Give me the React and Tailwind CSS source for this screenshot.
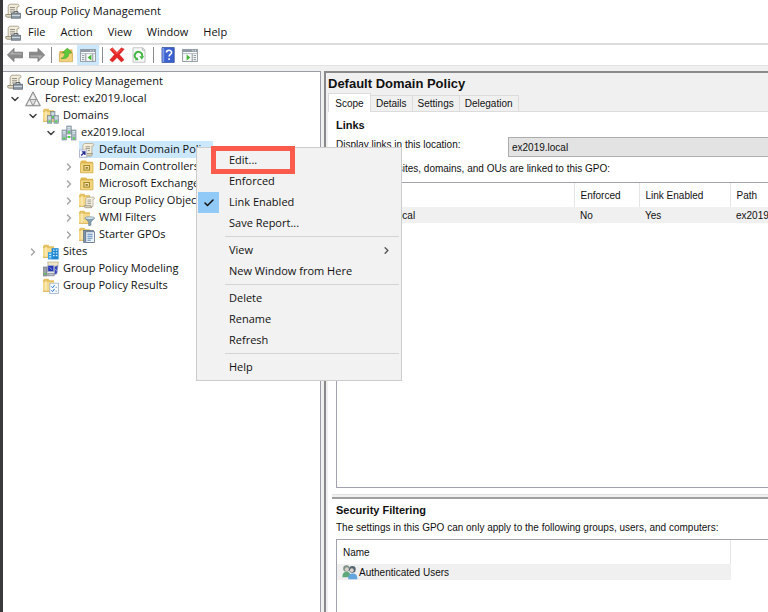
import clsx from 'clsx'
import { Check, ChevronDown, ChevronRight } from 'lucide-react'

function Svg({ children, size = 16, className }) {
  return (
    <svg width={size} height={size} viewBox="0 0 16 16" fill="none" className={clsx('shrink-0', className)} aria-hidden="true">
      {children}
    </svg>
  )
}

/* shared icon parts */

const Folder = () => (
  <>
    <path d="M0 2.5 1 .8h4.4l1 1.5H11V13H0z" fill="#e6c162" />
    <path d="M0 4h11v9.6H0z" fill="#f5da8b" />
    <path d="M2.4 3h1.2v10H2.4z" fill="#fcefc4" />
    <path d="M0 12.8h11v.9H0z" fill="#d3ab4c" />
  </>
)

const Scroll = () => (
  <>
    <path d="M4.5 1.2h8.2c1.6 0 1.8 2.8.3 2.8h-1V12H3.2V3.2z" fill="#f1ecdb" stroke="#a59d86" strokeWidth=".9" />
    <path d="M.8 11.5h9.3c-.8 1 .1 2.6 1.3 2.7H2.2c-1.4 0-1.9-1.7-1.4-2.7z" fill="#ded7c2" stroke="#8f8975" strokeWidth=".9" />
    <path d="M5 4.6h5M5 6.8h5M5 9h4" stroke="#8f8d84" strokeWidth="1" />
  </>
)

const Tower = ({ x, y, h = 8 }) => (
  <>
    <rect x={x} y={y} width="4.4" height={h} fill="#a9bac4" stroke="#6d7f8a" strokeWidth=".6" />
    <path d={`M${x + 0.8} ${y + 1.6}h2.8M${x + 0.8} ${y + 3.2}h2.8`} stroke="#eef4f7" strokeWidth=".8" />
    <rect x={x + 1.2} y={y + h - 2.6} width="2" height="1.8" fill="#45d93c" />
  </>
)

/* tree icons */

const ConsoleIcon = () => (
  <Svg>
    <Scroll />
    <rect x="6.5" y="10.2" width="9" height="5" fill="#8d9aa6" stroke="#56626d" strokeWidth=".7" />
    <path d="M9 10V8.6h4V10" stroke="#56626d" strokeWidth="1" />
    <path d="M7 12.4h8" stroke="#dfe5e9" strokeWidth=".9" />
  </Svg>
)

const ForestIcon = () => (
  <Svg>
    <path d="M8 .8 15.4 14.8H.6z" fill="#c9c9c9" stroke="#808080" strokeWidth=".9" />
    <path d="M8 3.2 10.4 8H5.6z" fill="#f4f4f4" />
    <path d="M4.8 9 7.2 13.8H2.4zM11.2 9l2.4 4.8H8.8z" fill="#f4f4f4" />
    <path d="M4.6 8.4h6.8L8 14.8z" fill="#dedede" stroke="#808080" strokeWidth=".8" />
  </Svg>
)

const DomainsIcon = () => (
  <Svg>
    <Folder />
    <Tower x={7.6} y={3.6} h={7} />
    <Tower x={4.4} y={7.6} h={7.6} />
    <Tower x={11} y={7.6} h={7.6} />
  </Svg>
)

const DomainIcon = () => (
  <Svg>
    <Tower x={5.8} y={1} h={8} />
    <Tower x={1} y={5} h={10} />
    <Tower x={10.6} y={5} h={10} />
    <path d="M5.4 12h5.2" stroke="#6d7f8a" />
    <rect x="7" y="11" width="2" height="2" fill="#45d93c" />
  </Svg>
)

const GpoLinkIcon = () => (
  <Svg>
    <path d="M5.5 1.5h8.2c1.4 0 1.5 2.4.2 2.4h-1V12h-9V3.4z" fill="#f6efdb" stroke="#b1a687" strokeWidth=".8" />
    <path d="M7 11.5h6.5c-.5 1 0 2.4-1.6 2.6H7z" fill="#d9cfb3" stroke="#8f8975" strokeWidth=".7" />
    <path d="M6.5 4.8h4.5M6.5 6.6h4.5M9 8.6h2" stroke="#8f8d84" strokeWidth=".9" />
    <rect x=".6" y="8" width="7.2" height="7.2" fill="#fff" stroke="#a5a9c4" strokeWidth=".8" />
    <path d="m2.2 13.6 3.4-3.4M2.8 9.9h3.1V13" stroke="#252b92" strokeWidth="1.4" />
  </Svg>
)

const OuIcon = () => (
  <Svg>
    <path d="M1.5 2.6 2.4 1.4H7l1 1.4h6v10.8H1.5z" fill="#e3bb50" />
    <path d="M1.5 4H14v9.8H1.5z" fill="#f3d780" stroke="#cfa948" strokeWidth=".7" />
    <rect x="4.4" y="6" width="6.6" height="5.6" fill="#a38325" />
    <rect x="5.5" y="7" width="4.4" height="3.6" fill="#f6e5a7" />
    <path d="M6.6 8h2.2v1.8H6.6z" fill="#957b2c" />
  </Svg>
)

const GpoFolderIcon = () => (
  <Svg>
    <Folder />
    <path d="M8 4.2h6.4c1.4 0 1.4 2 .2 2H14v7.4H6.8V5.8z" fill="#f8f3e3" stroke="#a29b86" strokeWidth=".7" />
    <path d="M5.3 12.6h6.6c-.3.9.2 1.9 1 2.1H6.4c-1.2 0-1.3-1.4-1.1-2.1z" fill="#ddd6c0" stroke="#8f8975" strokeWidth=".7" />
    <path d="M8.4 7h3.8M8.4 8.8h3.8M8.4 10.6h3.8" stroke="#8e8c84" strokeWidth=".8" />
  </Svg>
)

const WmiIcon = () => (
  <Svg>
    <Folder />
    <path d="M5.8 8h9.8l-3.7 4v3.2l-2.2.5V12z" fill="#86a0b2" stroke="#5e7585" strokeWidth=".6" />
    <ellipse cx="10.7" cy="8.1" rx="4.8" ry="1.4" fill="#cfe2ee" stroke="#6f8796" strokeWidth=".6" />
  </Svg>
)

const StarterIcon = () => (
  <Svg>
    <Folder />
    <rect x="4.6" y="3.4" width="10" height="12" fill="#7c93aa" stroke="#4f6376" strokeWidth=".6" />
    <rect x="6.8" y="4.8" width="8.6" height="10.6" fill="#eef4fa" stroke="#5d7186" strokeWidth=".8" />
    <path d="M8.4 7.2h5.2M8.4 9.2h5.2M8.4 11.2h5.2M8.4 13.2h3.4" stroke="#4679b4" strokeWidth=".9" />
  </Svg>
)

const SitesIcon = () => (
  <Svg>
    <Folder />
    <rect x="8.6" y="4.2" width="7" height="11.2" fill="#1d86cf" />
    <rect x="5" y="8.2" width="4.4" height="7.2" fill="#3aa0e2" />
    <path d="M10 6.2h1.6M12.8 6.2h1.6M10 8.9h1.6M12.8 8.9h1.6M10 11.6h1.6M12.8 11.6h1.6M6.2 10.3h1.8M6.2 12.8h1.8" stroke="#d4efff" strokeWidth="1.2" />
  </Svg>
)

const ModelingIcon = () => (
  <Svg>
    <path d="M4.6 1h10.8l-1.2 8H6z" fill="#eee4c4" stroke="#aaa183" strokeWidth=".6" />
    <rect x="4.8" y="4.6" width="6" height="6" fill="#2736b8" stroke="#a6adc2" strokeWidth=".8" />
    <rect x=".6" y="6" width="3.4" height="9" fill="#9ba2aa" stroke="#666d75" strokeWidth=".6" />
    <path d="m11.4 5.6 3.6-1.2-1 8.4-2.6.8z" fill="#3444bb" stroke="#a6adc2" strokeWidth=".7" />
    <path d="M4.8 12.2h6.4v2.6H4.8z" fill="#b8bec6" stroke="#6b727b" strokeWidth=".6" />
    <path d="M1.4 12.8h1.8" stroke="#45c83e" strokeWidth="1.5" />
    <path d="M6.6 6.4 9 8.6M12.4 8l1.2 2" stroke="#a9b8ff" strokeWidth=".8" />
  </Svg>
)

const ResultsIcon = () => (
  <Svg>
    <Folder />
    <rect x="6.8" y="5.2" width="8.6" height="10.2" fill="#f7fbff" stroke="#9db0c2" strokeWidth=".8" />
    <path d="m8.4 8.4 1.2 1.4 2-2.7M8.4 12.2l1.2 1.4 2-2.7" stroke="#2674c8" strokeWidth="1" />
    <path d="M12.4 9.4h1.6M12.4 13.2h1.6" stroke="#7f93a6" strokeWidth=".8" />
  </Svg>
)

const UsersIcon = () => (
  <Svg>
    <circle cx="4.4" cy="4.4" r="3.2" fill="#7f9189" />
    <circle cx="4.8" cy="5.2" r="1.9" fill="#d9d4cb" />
    <path d="M.4 13.2c0-4 1.6-5.4 4.2-5.4s4 1.4 4 5.4z" fill="#5fa77b" />
    <circle cx="10.4" cy="5.4" r="3.3" fill="#54646e" />
    <circle cx="9.8" cy="6.2" r="1.9" fill="#dcd6cf" />
    <path d="M6.2 15.2c0-4 1.7-5.6 4.6-5.6s4.6 1.6 4.6 5.6z" fill="#62a5dc" />
  </Svg>
)

/* toolbar icons */

const ArrowIcon = ({ flip }) => (
  <Svg className={flip && 'rotate-180'}>
    <path d="M.4 8 7 1.4v3.8h8.6v5.6H7v3.8z" fill="#8a8a8a" stroke="#757575" strokeWidth=".8" strokeLinejoin="round" />
    <path d="M2.2 7.6 6.2 3.8v2.4h8.4v1.4z" fill="#b3b3b3" />
  </Svg>
)

const UpFolderIcon = () => (
  <Svg>
    <path d="M1.4 4h5l1-1.4h7V14h-13z" fill="#dcb252" />
    <path d="M1.4 6h13.2v8.8H1.4z" fill="#f1d07c" stroke="#c89d45" strokeWidth=".6" />
    <path d="M3 11.4c3-1 4-3.2 3.8-5.4H4.2L9.4 1l4.2 5h-2.8c.2 4.4-3 6.4-7.8 5.4z" fill="#5cc83c" stroke="#3a9a29" strokeWidth=".5" />
  </Svg>
)

const PaneIcon = ({ right }) => (
  <Svg>
    <rect x=".6" y="2.4" width="14.8" height="12" fill="#f8f9fa" stroke="#8b949c" strokeWidth=".9" />
    <path d="M1 2.6h14v2.4H1z" fill="#8f9aa4" />
    <path d="M10.4 3.8h1M12.8 3.8h1" stroke="#fff" />
    <path d="M1 6.6h14" stroke="#a4adb5" strokeWidth=".8" />
    {right ? (
      <>
        <path d="M10.2 6.8v7.4" stroke="#8b949c" />
        <path d="M11.6 8.6h2.4M11.6 10.6h2.4M11.6 12.6h2.4" stroke="#8d98a2" />
        <path d="M4.6 7.4 8.4 10.4 4.6 13.4z" fill="#46b436" />
      </>
    ) : (
      <>
        <path d="M5.8 6.8v7.4M12.8 6.8v7.4" stroke="#8b949c" />
        <path d="M2 8.6h2.4M2 10.6h2.4M2 12.6h2.4" stroke="#8d98a2" />
        <path d="M11.4 7.4 7.6 10.4l3.8 3z" fill="#46b436" />
      </>
    )}
  </Svg>
)

const DeleteIcon = () => (
  <Svg>
    <path d="M1 2.6 3.4.8 8 5.4 12.4.8l2.8 1.4-4.8 5.4 4.6 5.2-2.6 2.2L8 10.4 3.6 15 .8 13l4.8-5.4z" fill="#e42626" stroke="#c91d1d" strokeWidth=".5" />
    <path d="M2.4 2.8 3.4 2 8 6.6l4.4-4.4" stroke="#ff7b72" strokeWidth=".8" />
  </Svg>
)

const RefreshIcon = () => (
  <Svg>
    <path d="M2 .8h9.6L14 3.2v12H2z" fill="#fbfbfb" stroke="#b4b4b4" strokeWidth=".8" />
    <path d="M11.6.8v2.4H14" stroke="#a7a7a7" strokeWidth=".8" />
    <path d="M5.6 11.8A3.7 3.7 0 1 1 11 9.6" stroke="#3fb440" strokeWidth="1.9" />
    <path d="M8.2 9.2h5l-2.4 3.4z" fill="#3fb440" />
    <path d="M3.6 13.2h3.8l-.8-3z" fill="#3fb440" />
  </Svg>
)

const HelpIcon = () => (
  <Svg>
    <path d="M2 .6h12.2v14.8H2z" fill="#3c63d1" stroke="#2c4798" strokeWidth=".8" />
    <path d="M2.4 1h1.8v14H2.4z" fill="#7f9cea" />
    <path d="M6.4 5.6c0-3 5.2-3 5.2-.2 0 2-2.5 2-2.5 4.2M9.1 11.2v1.8" stroke="#fff" strokeWidth="1.6" />
  </Svg>
)

const menuBar = ['File', 'Action', 'View', 'Window', 'Help']

const toolbar = [
  { label: 'Back', icon: <ArrowIcon /> },
  { label: 'Forward', icon: <ArrowIcon flip /> },
  null,
  { label: 'Up one level', icon: <UpFolderIcon /> },
  { label: 'Show/Hide console tree', icon: <PaneIcon />, active: true },
  null,
  { label: 'Delete', icon: <DeleteIcon /> },
  { label: 'Refresh', icon: <RefreshIcon /> },
  null,
  { label: 'Help', icon: <HelpIcon /> },
  { label: 'Show/Hide action pane', icon: <PaneIcon right /> },
]

const forest = [
  {
    label: 'Forest: ex2019.local',
    icon: ForestIcon,
    open: true,
    children: [
      {
        label: 'Domains',
        icon: DomainsIcon,
        open: true,
        children: [
          {
            label: 'ex2019.local',
            icon: DomainIcon,
            open: true,
            children: [
              { label: 'Default Domain Policy', icon: GpoLinkIcon, selected: true },
              { label: 'Domain Controllers', icon: OuIcon, closed: true },
              { label: 'Microsoft Exchange', icon: OuIcon, closed: true },
              { label: 'Group Policy Objects', icon: GpoFolderIcon, closed: true },
              { label: 'WMI Filters', icon: WmiIcon, closed: true },
              { label: 'Starter GPOs', icon: StarterIcon, closed: true },
            ],
          },
        ],
      },
      { label: 'Sites', icon: SitesIcon, closed: true },
      { label: 'Group Policy Modeling', icon: ModelingIcon },
      { label: 'Group Policy Results', icon: ResultsIcon },
    ],
  },
]

const contextMenu = [
  ['Edit...', 'Enforced', 'Link Enabled', 'Save Report...'],
  ['View', 'New Window from Here'],
  ['Delete', 'Rename', 'Refresh'],
  ['Help'],
]

function Tree({ nodes, className }) {
  return (
    <ul className={className}>
      {nodes.map(({ label, icon: Icon, open, closed, selected, children }) => (
        <li key={label}>
          <div className="flex h-[17px] items-center">
            <span className="w-[18px] shrink-0 pl-[2px]">
              {open && <ChevronDown size={12} strokeWidth={3} className="text-[#404040]" />}
              {closed && <ChevronRight size={12} strokeWidth={3} className="text-[#a6a6a6]" />}
            </span>
            <span className={clsx('flex h-[17px] items-center gap-1 pr-px whitespace-nowrap', selected && 'bg-[#cce8ff]')}>
              <Icon />
              {label}
            </span>
          </div>
          {children && <Tree nodes={children} className="pl-[18px]" />}
        </li>
      ))}
    </ul>
  )
}

function ContextMenu() {
  return (
    <div role="menu" className="absolute left-[193px] top-[147px] z-10 w-[206px] border border-[#cccccc] bg-[#f2f2f2] py-[2px]">
      {contextMenu.map((items, i) => (
        <div key={items[0]}>
          {i > 0 && <div className="mr-[2px] ml-7 h-[6px] pt-[2px]"><div className="h-px bg-[#d4d4d4]" /></div>}
          {items.map((item) => (
            <button key={item} role="menuitem" className="relative flex h-[21px] w-full items-center px-px text-left">
              <span className={clsx('mr-[10px] flex size-[21px] items-center justify-center', item === 'Link Enabled' && 'bg-[#91c9f7]')}>
                {item === 'Link Enabled' && <Check size={12} strokeWidth={3} />}
              </span>
              {item}
              {item === 'View' && <ChevronRight size={11} strokeWidth={3} className="mr-2 ml-auto text-[#555]" />}
              {item === 'Edit...' && <span className="absolute -top-1 left-[14px] h-7 w-[84px] border-[5px] border-[#fb5b4c]" />}
            </button>
          ))}
        </div>
      ))}
    </div>
  )
}

function ScopeTab() {
  return (
    <div className="flex min-h-0 flex-1 flex-col bg-white">
      <section className="flex min-h-0 flex-1 flex-col pl-2">
        <h2 className="mt-[5px] text-[11px] leading-4 font-bold">Links</h2>
        <div className="mt-1 flex h-5 items-center">
          <label htmlFor="location" className="w-[172px] shrink-0 pb-[6px]">Display links in this location:</label>
          <select id="location" className="h-5 min-w-0 flex-1 appearance-none border border-r-0 border-[#adadad] bg-[#e3e3e3] pl-[3px]">
            <option>ex2019.local</option>
          </select>
        </div>
        <p className="mt-1 h-4 leading-4 whitespace-nowrap">The following sites, domains, and OUs are linked to this GPO:</p>
        <div className="mt-[5px] min-h-0 flex-1 overflow-hidden border border-r-0 border-[#a0a3ad]">
          <table className="w-full table-fixed whitespace-nowrap">
            <thead>
              <tr className="h-6 text-left">
                <th className="w-[237px] border-r border-[#e5e5e5] pl-[6px] font-normal">Location</th>
                <th className="w-[65px] border-r border-[#e5e5e5] pl-[6px] font-normal">Enforced</th>
                <th className="w-[91px] border-r border-[#e5e5e5] pl-[6px] font-normal">Link Enabled</th>
                <th className="pl-[6px] font-normal">Path</th>
              </tr>
            </thead>
            <tbody>
              <tr className="h-4 bg-[#f0f0f0]">
                <td className="pl-[5px]"><span className="flex h-4 items-center gap-px"><DomainIcon />ex2019.local</span></td>
                <td className="pl-[6px]">No</td>
                <td className="pl-[6px]">Yes</td>
                <td className="overflow-hidden pl-[6px]">ex2019.local</td>
              </tr>
            </tbody>
          </table>
        </div>
      </section>
      <div className="mt-[6px] ml-1 h-[5px] shrink-0 border-t border-b-2 border-t-[#e3e3e3] border-b-[#a0a0a0] bg-[#f0f0f0]" />
      <section className="flex h-[113px] shrink-0 flex-col pl-2">
        <h2 className="mt-[3px] text-[11px] leading-4 font-bold">Security Filtering</h2>
        <p className="mt-[2px] leading-4 whitespace-nowrap">The settings in this GPO can only apply to the following groups, users, and computers:</p>
        <div className="mt-[3px] flex-1 border-t border-l border-[#a0a3ad]">
          <table className="w-[394px]">
            <thead>
              <tr className="h-6 text-left"><th className="border-r border-[#e5e5e5] pl-[6px] font-normal">Name</th></tr>
            </thead>
            <tbody>
              <tr className="h-4 bg-[#f0f0f0]">
                <td className="pl-[5px]"><span className="flex h-4 items-center gap-px"><UsersIcon />Authenticated Users</span></td>
              </tr>
            </tbody>
          </table>
        </div>
      </section>
    </div>
  )
}

export default function App() {
  return (
    <div className="relative flex h-screen flex-col overflow-hidden border-l-3 border-[#3a3a3c] bg-[#f0f0f0] font-['Open_Sans',sans-serif] text-[11px] text-[#111]">
      <header className="shrink-0 bg-white">
        <div className="flex h-[22px] items-center gap-1 pl-[2px]"><ConsoleIcon />Group Policy Management</div>
        <nav className="flex h-[21px] items-center gap-[15px] pl-[2px]">
          <span className="-mr-2"><ConsoleIcon /></span>
          {menuBar.map((item) => <button key={item}>{item}</button>)}
        </nav>
        <div className="flex h-[23px] items-center border-t-2 border-b border-t-[#dcdcdc] border-b-[#e2e2e2] pl-px">
          {toolbar.map((tool, i) =>
            tool ? (
              <button key={tool.label} aria-label={tool.label} className={clsx('flex h-5 w-[22px] items-center justify-center', tool.active && 'bg-[#cce8ff]')}>
                {tool.icon}
              </button>
            ) : (
              <span key={i} className="mx-[3px] h-4 w-px bg-[#8c8c8c]" />
            )
          )}
        </div>
      </header>

      <main className="mt-[5px] flex min-h-0 flex-1">
        <aside className="w-[318px] shrink-0 border-t border-r border-[#9a9da6] bg-white pt-px pl-1">
          <div className="flex h-[17px] items-center gap-1"><ConsoleIcon />Group Policy Management</div>
          <Tree nodes={forest} />
        </aside>

        <div className="ml-[3px] flex min-w-0 flex-1 flex-col border-t-2 border-l-2 border-[#8a8a8a] pl-[2px] font-['Liberation_Sans',Arial,sans-serif] text-[10px]">
          <h1 className="h-[21px] text-[13px] leading-[21px] font-bold">Default Domain Policy</h1>
          <div role="tablist" className="flex h-[18px] shrink-0 items-end border-b border-[#dcdcdc]">
            <button role="tab" aria-selected="true" className="-mb-px h-[19px] w-[43px] border border-b-0 border-[#dcdcdc] bg-white">Scope</button>
            {['Details', 'Settings', 'Delegation'].map((tab) => (
              <button key={tab} role="tab" aria-selected="false" className="h-4 border-t border-r border-[#dcdcdc] px-[5px]">{tab}</button>
            ))}
          </div>
          <ScopeTab />
        </div>
      </main>

      <ContextMenu />
    </div>
  )
}
